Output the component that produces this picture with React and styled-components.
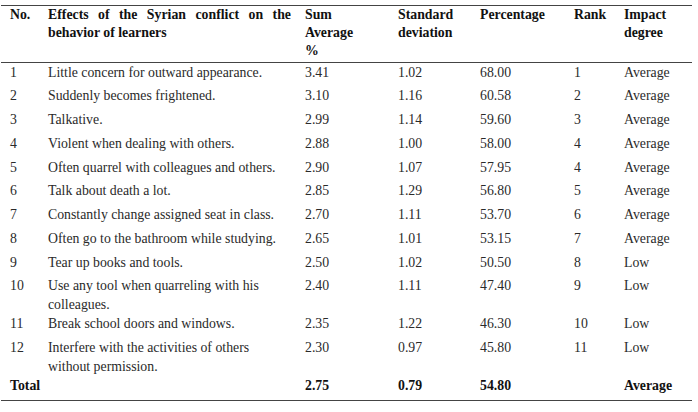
import React from "react";
import styled, { createGlobalStyle } from "styled-components";

const rows = [
  ["1", "Little concern for outward appearance.", "3.41", "1.02", "68.00", "1", "Average"],
  ["2", "Suddenly becomes frightened.", "3.10", "1.16", "60.58", "2", "Average"],
  ["3", "Talkative.", "2.99", "1.14", "59.60", "3", "Average"],
  ["4", "Violent when dealing with others.", "2.88", "1.00", "58.00", "4", "Average"],
  ["5", "Often quarrel with colleagues and others.", "2.90", "1.07", "57.95", "4", "Average"],
  ["6", "Talk about death a lot.", "2.85", "1.29", "56.80", "5", "Average"],
  ["7", "Constantly change assigned seat in class.", "2.70", "1.11", "53.70", "6", "Average"],
  ["8", "Often go to the bathroom while studying.", "2.65", "1.01", "53.15", "7", "Average"],
  ["9", "Tear up books and tools.", "2.50", "1.02", "50.50", "8", "Low"],
  ["10", "Use any tool when quarreling with his colleagues.", "2.40", "1.11", "47.40", "9", "Low"],
  ["11", "Break school doors and windows.", "2.35", "1.22", "46.30", "10", "Low"],
  ["12", "Interfere with the activities of others without permission.", "2.30", "0.97", "45.80", "11", "Low"],
];

const widths = [40, 257, 93, 82, 94, 50, 75];

export default function App() {
  return (
    <>
      <Global />
      <Table>
        <colgroup>
          {widths.map((w, i) => (
            <col key={i} style={{ width: w }} />
          ))}
        </colgroup>
        <thead>
          <tr>
            <Th>No.</Th>
            <Th $justify>Effects of the Syrian conflict on the behavior of learners</Th>
            <Th>
              Sum
              <br />
              Average
              <br />%
            </Th>
            <Th>
              Standard
              <br />
              deviation
            </Th>
            <Th>Percentage</Th>
            <Th>Rank</Th>
            <Th>
              Impact
              <br />
              degree
            </Th>
          </tr>
        </thead>
        <tbody>
          {rows.map((r) => (
            <Row key={r[0]}>
              {r.map((c, i) => (
                <Td key={i}>{c}</Td>
              ))}
            </Row>
          ))}
          <TotalRow>
            <Td $bold>Total</Td>
            <Td />
            <Td $bold>2.75</Td>
            <Td $bold>0.79</Td>
            <Td $bold>54.80</Td>
            <Td />
            <Td $bold>Average</Td>
          </TotalRow>
        </tbody>
      </Table>
    </>
  );
}

// - Styled Components - //
const Global = createGlobalStyle`
  body {
    margin: 0;
    background: #ffffff;
    font-family: "Liberation Serif", "Times New Roman", serif;
    color: #222;
  }
`;

const Table = styled.table`
  margin: 5px 0 0 1px;
  width: 691px;
  table-layout: fixed;
  border-collapse: collapse;
  font-size: 13.8px;
  border-top: 1px solid #444;
  border-bottom: 1px solid #444;

  thead tr {
    height: 56px;
    border-bottom: 1px solid #444;
  }

  th:first-child,
  td:first-child {
    padding-left: 9px;
  }
`;

const Th = styled.th`
  padding: 0 7px 2px;
  vertical-align: top;
  text-align: ${(p) => (p.$justify ? "justify" : "left")};
  text-align-last: left;
  font-weight: bold;
  line-height: 18px;
  color: #111;
`;

const Row = styled.tr`
  height: 23.75px;
`;

const TotalRow = styled.tr`
  height: 24.5px;
`;

const Td = styled.td`
  padding: 1px 7px 0;
  vertical-align: top;
  text-align: left;
  line-height: 18.5px;
  font-weight: ${(p) => (p.$bold ? "bold" : "normal")};
  color: ${(p) => (p.$bold ? "#111" : "#2a2a2a")};
`;
